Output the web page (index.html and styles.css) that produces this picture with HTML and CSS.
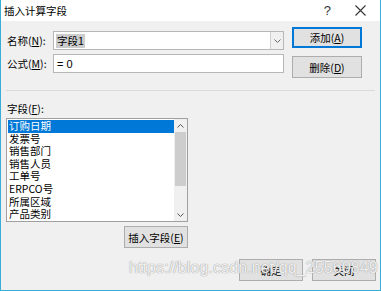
FILE: index.html
```html
<!DOCTYPE html>
<html lang="zh-CN">
<head>
    <meta charset="UTF-8">
    <title>插入计算字段</title>
    <link rel="stylesheet" href="styles.css">
</head>
<body>
    <div class="dialog">
        <!-- Title bar -->
        <div class="titlebar">
            <span class="title">插入计算字段</span>
            <span class="help">?</span>
            <svg class="close-x" width="11" height="11" viewBox="0 0 11 11">
                <path d="M0.5 0.5 L10.5 10.5 M10.5 0.5 L0.5 10.5" stroke="#333" stroke-width="1.1" fill="none"/>
            </svg>
        </div>

        <!-- Name / formula -->
        <div class="top">
            <div class="fields">
                <div class="row">
                    <label>名称(<u>N</u>):</label>
                    <div class="combo">
                        <span class="sel">字段1</span>
                        <span class="drop">
                            <svg width="7" height="4" viewBox="0 0 7 4"><path d="M0.5 0.5 L3.5 3.5 L6.5 0.5" stroke="#666" fill="none"/></svg>
                        </span>
                    </div>
                </div>
                <div class="row">
                    <label>公式(<u>M</u>):</label>
                    <div class="input">= 0</div>
                </div>
            </div>
            <div class="side-buttons">
                <button class="btn default">添加(<u>A</u>)</button>
                <button class="btn">删除(<u>D</u>)</button>
            </div>
        </div>

        <div class="separator"></div>

        <!-- Field list -->
        <div class="list-label">字段(<u>F</u>):</div>
        <div class="listbox">
            <ul class="items">
                <li class="active">订购日期</li>
                <li>发票号</li>
                <li>销售部门</li>
                <li>销售人员</li>
                <li>工单号</li>
                <li>ERPCO号</li>
                <li>所属区域</li>
                <li>产品类别</li>
            </ul>
            <div class="scrollbar">
                <span class="arrow">
                    <svg width="7" height="4" viewBox="0 0 7 4"><path d="M0.5 3.5 L3.5 0.5 L6.5 3.5" stroke="#555" fill="none"/></svg>
                </span>
                <span class="thumb"></span>
                <span class="track"></span>
                <span class="arrow">
                    <svg width="7" height="4" viewBox="0 0 7 4"><path d="M0.5 0.5 L3.5 3.5 L6.5 0.5" stroke="#555" fill="none"/></svg>
                </span>
            </div>
        </div>
        <div class="insert-row">
            <button class="btn insert">插入字段(<u>E</u>)</button>
        </div>

        <!-- Footer -->
        <div class="footer">
            <button class="btn faded">确定</button>
            <button class="btn">关闭</button>
        </div>

        <div class="watermark">https://blog.csdn.net/qq_25560849</div>
    </div>
</body>
</html>
```

FILE: styles.css
```css
body {
    margin: 0;
    padding: 0;
    font-family: "Noto Sans CJK SC", "Liberation Sans", sans-serif;
    font-size: 10.5px;
    color: #000;
}

.dialog {
    position: relative;
    width: 381px;
    height: 291px;
    box-sizing: border-box;
    border: 1px solid #39afd7;
    border-top: none;
    background-color: #f0f0f0;
    overflow: hidden;
}

/* Title bar */
.titlebar {
    height: 21px;
    background-color: #fff;
    display: flex;
    align-items: center;
    padding-left: 3px;
}

.title {
    font-size: 10.5px;
    flex: 1;
}

.help {
    font-family: "Liberation Sans", sans-serif;
    font-size: 13px;
    color: #333;
    margin-right: 24px;
}

.close-x {
    margin-right: 14px;
}

/* Top part */
.top {
    display: flex;
    padding: 6px 0 0 5px;
}

.fields {
    padding-top: 4px;
    width: 278px;
}

.row {
    display: flex;
    align-items: center;
    margin-bottom: 4px;
}

.row label {
    width: 46px;
    padding-left: 1px;
}

.combo, .input {
    width: 231px;
    height: 19px;
    box-sizing: border-box;
    background: #fff;
    border: 1px solid #b7b7b7;
    display: flex;
    align-items: center;
    padding-left: 2px;
}

.sel {
    background: #cccccc;
    line-height: 14px;
    padding: 0 1px;
}

.combo .drop {
    margin-left: auto;
    width: 12px;
    height: 17px;
    border-left: 1px solid #d0d0d0;
    background: #f0f0f0;
    display: flex;
    align-items: center;
    justify-content: center;
}

.input {
    font-family: "Liberation Sans", sans-serif;
    font-size: 11px;
    padding-left: 3px;
}

.side-buttons {
    display: flex;
    flex-direction: column;
    gap: 8px;
    margin-left: 8px;
}

.btn {
    font-family: "Noto Sans CJK SC", "Liberation Sans", sans-serif;
    font-size: 10.5px;
    color: #000;
    background-color: #e1e1e1;
    border: 1px solid #adadad;
    width: 70px;
    height: 22px;
    padding: 0;
    margin: 0;
    white-space: nowrap;
}

.btn.default {
    border: 1px solid #0078d7;
    box-shadow: inset 0 0 0 1px #0078d7;
    height: 21px;
}

.separator {
    height: 1px;
    background-color: #dadada;
    margin: 12px 5px 0 5px;
}

/* Field list */
.list-label {
    margin: 11px 0 0 6px;
    line-height: 14px;
}

.listbox {
    margin: 2px 0 0 5px;
    width: 182px;
    height: 104px;
    box-sizing: border-box;
    border: 1px solid #a0a0a0;
    background: #fff;
    display: flex;
}

.items {
    list-style: none;
    margin: 0;
    padding: 1px 0 0 1px;
    flex: 1;
}

.items li {
    height: 12.6px;
    line-height: 12.6px;
    padding-left: 1px;
}

.items li.active {
    background-color: #0078d7;
    color: #fff;
}

.scrollbar {
    width: 13px;
    display: flex;
    flex-direction: column;
    background: #f0f0f0;
}

.scrollbar .arrow {
    height: 13px;
    display: flex;
    align-items: center;
    justify-content: center;
}

.scrollbar .thumb {
    height: 54px;
    margin: 0 1px;
    background-color: #cdcdcd;
}

.scrollbar .track {
    flex: 1;
}

.insert-row {
    width: 182px;
    margin-left: 5px;
    display: flex;
    justify-content: flex-end;
    margin-top: 4px;
}

.btn.insert {
    width: 64px;
}

/* Footer */
.footer {
    display: flex;
    justify-content: flex-end;
    gap: 9px;
    margin: 11px 4px 0 0;
}

.footer .btn {
    width: 64px;
    height: 22px;
}

.watermark {
    position: absolute;
    left: 128px;
    top: 259px;
    font-family: "Liberation Sans", sans-serif;
    font-size: 16px;
    color: rgba(255, 255, 255, 0.85);
    text-shadow: 0 0 1px #9a9a9a, 0 0 1px #b0b0b0;
    letter-spacing: 0.1px;
}
```
